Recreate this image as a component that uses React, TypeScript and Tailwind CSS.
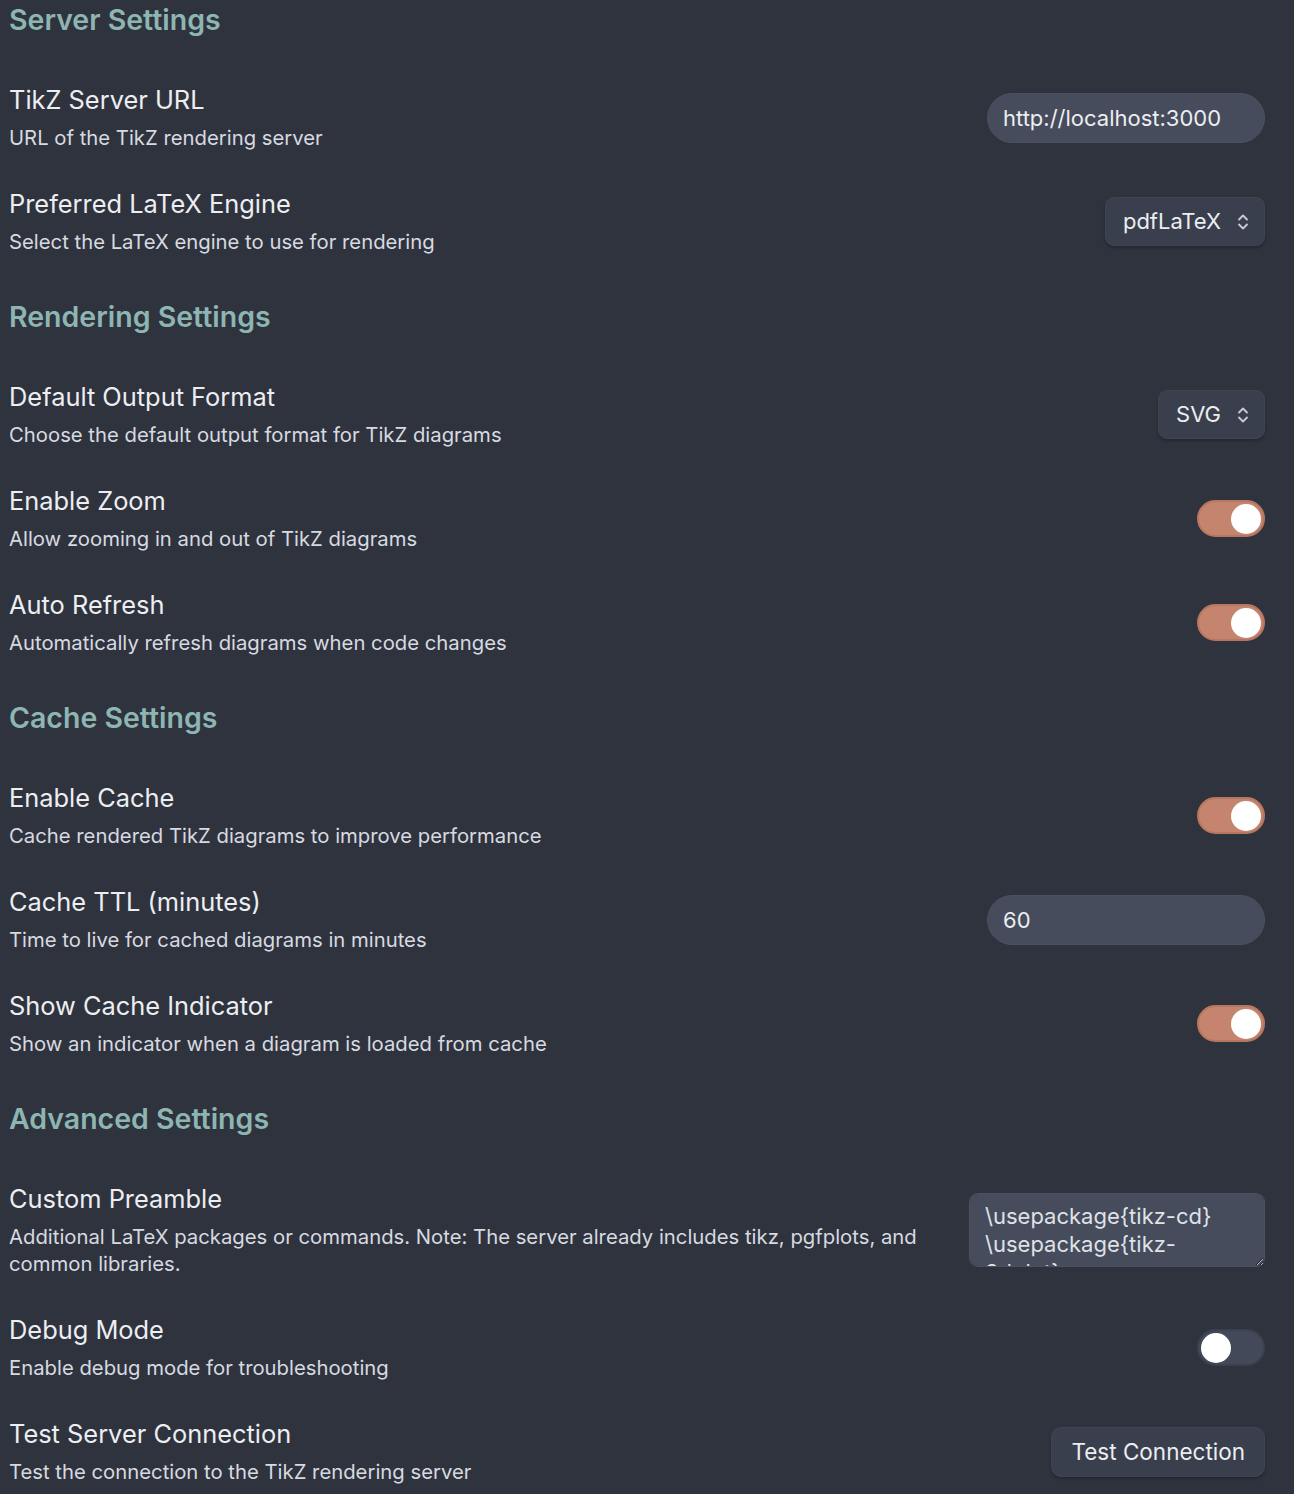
import React, { useState } from "react";

type Control =
  | { kind: "text"; value: string }
  | { kind: "select"; value: string }
  | { kind: "toggle"; on: boolean }
  | { kind: "textarea"; value: string }
  | { kind: "button"; label: string };

interface Item {
  name: string;
  desc: string;
  control: Control;
}

interface Section {
  title: string;
  items: Item[];
}

const sections: Section[] = [
  {
    title: "Server Settings",
    items: [
      { name: "TikZ Server URL", desc: "URL of the TikZ rendering server", control: { kind: "text", value: "http://localhost:3000" } },
      { name: "Preferred LaTeX Engine", desc: "Select the LaTeX engine to use for rendering", control: { kind: "select", value: "pdfLaTeX" } },
    ],
  },
  {
    title: "Rendering Settings",
    items: [
      { name: "Default Output Format", desc: "Choose the default output format for TikZ diagrams", control: { kind: "select", value: "SVG" } },
      { name: "Enable Zoom", desc: "Allow zooming in and out of TikZ diagrams", control: { kind: "toggle", on: true } },
      { name: "Auto Refresh", desc: "Automatically refresh diagrams when code changes", control: { kind: "toggle", on: true } },
    ],
  },
  {
    title: "Cache Settings",
    items: [
      { name: "Enable Cache", desc: "Cache rendered TikZ diagrams to improve performance", control: { kind: "toggle", on: true } },
      { name: "Cache TTL (minutes)", desc: "Time to live for cached diagrams in minutes", control: { kind: "text", value: "60" } },
      { name: "Show Cache Indicator", desc: "Show an indicator when a diagram is loaded from cache", control: { kind: "toggle", on: true } },
    ],
  },
  {
    title: "Advanced Settings",
    items: [
      {
        name: "Custom Preamble",
        desc: "Additional LaTeX packages or commands. Note: The server already includes tikz, pgfplots, and common libraries.",
        control: { kind: "textarea", value: "\\usepackage{tikz-cd}\n\\usepackage{tikz-3dplot}" },
      },
      { name: "Debug Mode", desc: "Enable debug mode for troubleshooting", control: { kind: "toggle", on: false } },
      { name: "Test Server Connection", desc: "Test the connection to the TikZ rendering server", control: { kind: "button", label: "Test Connection" } },
    ],
  },
];

function Toggle({ initial }: { initial: boolean }) {
  const [on, setOn] = useState(initial);
  return (
    <button
      onClick={() => setOn(!on)}
      className={
        on
          ? "flex h-[37px] w-[68px] items-center justify-end rounded-full border-2 border-[#b6765f] bg-[#c4846e] px-[2px]"
          : "flex h-[37px] w-[68px] items-center justify-start rounded-full border-2 border-[#3c4150] bg-[#434958] px-[2px]"
      }
    >
      <span className="h-[30px] w-[30px] rounded-full bg-white" />
    </button>
  );
}

function UpDown() {
  return (
    <svg width="14" height="20" viewBox="0 0 14 20" fill="none" stroke="#c9ccd3" strokeWidth="1.8" strokeLinecap="round" strokeLinejoin="round">
      <path d="M3 7.5 7 3.5l4 4" />
      <path d="M3 12.5l4 4 4-4" />
    </svg>
  );
}

function ControlView({ c }: { c: Control }) {
  switch (c.kind) {
    case "text":
      return (
        <input
          defaultValue={c.value}
          className="h-[50px] w-[278px] rounded-full border border-[#4b5161] bg-[#464c5c] px-[15px] text-[22px] text-[#eceef1] outline-none"
        />
      );
    case "select":
      return (
        <div className="flex h-[49px] items-center gap-[15px] rounded-[9px] border border-[#3f4453] bg-[#3a3f4d] pl-[17px] pr-[14px] text-[22px] text-[#eceef1] shadow-[0_2px_3px_rgba(0,0,0,0.25)]">
          <span>{c.value}</span>
          <UpDown />
        </div>
      );
    case "toggle":
      return <Toggle initial={c.on} />;
    case "textarea":
      return (
        <textarea
          defaultValue={c.value}
          className="h-[74px] w-[296px] resize-y rounded-[9px] border border-[#4b5161] bg-[#464c5c] px-[15px] py-[8px] text-[22px] leading-[28px] text-[#dfe2e7] outline-none"
        />
      );
    case "button":
      return (
        <button className="h-[50px] rounded-[10px] border border-[#3f4453] bg-[#3a3f4d] px-[19px] text-[22.5px] text-[#eceef1] shadow-[0_2px_3px_rgba(0,0,0,0.25)]">
          {c.label}
        </button>
      );
  }
}

export default function App() {
  return (
    <div className="min-h-screen bg-[#2f333e] pl-[9px] pr-[29px] font-['Inter',sans-serif] antialiased">
      {sections.map((s, i) => (
        <div key={s.title}>
          {/* Section heading */}
          <h3 className={(i === 0 ? "" : "mt-[25px] ") + "mb-6 h-[40px] text-[28.5px] font-semibold leading-[40px] text-[#8db6b2]"}>
            {s.title}
          </h3>
          {s.items.map((it) => (
            <div key={it.name} className="flex items-center pt-5 pb-[17px]">
              <div className="min-w-0 flex-1 pr-[40px]">
                <div className="text-[25.4px] leading-[32px] text-[#eceef1]">{it.name}</div>
                <div className="mt-[8px] text-[20.3px] leading-[27px] text-[#d7dae0]">{it.desc}</div>
              </div>
              <div className="flex shrink-0 justify-end">
                <ControlView c={it.control} />
              </div>
            </div>
          ))}
        </div>
      ))}
    </div>
  );
}
